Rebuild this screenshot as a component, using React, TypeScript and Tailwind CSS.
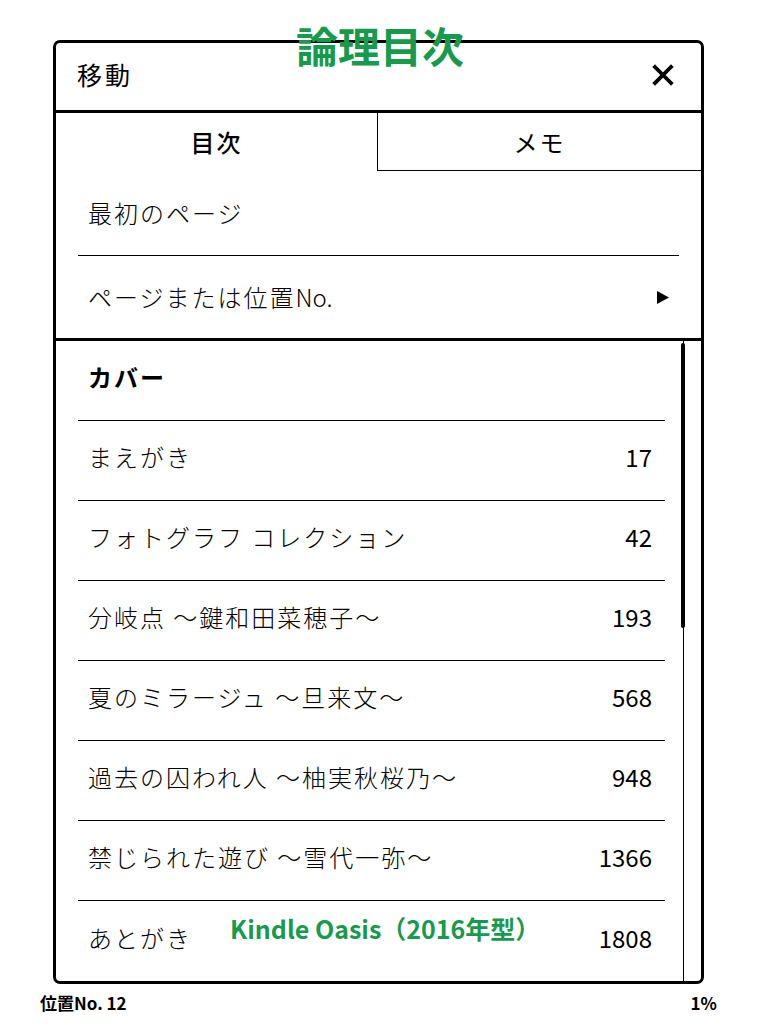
import React from "react";

// Kindle "移動" dialog showing the logical table of contents.
const FONT = { fontFamily: '"Noto Sans CJK JP", "Noto Sans", sans-serif' };

const chapters: { title: string; loc?: string; bold?: boolean }[] = [
  { title: "カバー", bold: true },
  { title: "まえがき", loc: "17" },
  { title: "フォトグラフ コレクション", loc: "42" },
  { title: "分岐点 〜鍵和田菜穂子〜", loc: "193" },
  { title: "夏のミラージュ 〜旦来文〜", loc: "568" },
  { title: "過去の囚われ人 〜柚実秋桜乃〜", loc: "948" },
  { title: "禁じられた遊び 〜雪代一弥〜", loc: "1366" },
  { title: "あとがき", loc: "1808" },
];

function CloseIcon() {
  return (
    <svg width="22" height="22" viewBox="0 0 22 22" aria-hidden="true">
      <path d="M3 3 L19 19 M19 3 L3 19" stroke="#000" strokeWidth="3.8" strokeLinecap="square" />
    </svg>
  );
}

export default function App() {
  return (
    <div className="relative h-[1024px] w-[758px] overflow-hidden bg-white text-black" style={FONT}>
      <div className="ml-[53px] mt-[40px] flex h-[944px] w-[651px] flex-col overflow-hidden rounded-[7px] border-[3px] border-black">
        <header className="flex h-[70px] shrink-0 items-center justify-between border-b-[3px] border-black pb-[4px] pl-[21px] pr-[27px]">
          <span className="text-[25px] leading-none tracking-[3px]">移動</span>
          <CloseIcon />
        </header>

        <div className="flex h-[58px] shrink-0">
          <div className="flex w-[321px] items-center justify-center text-[24px] font-medium tracking-[2px]">目次</div>
          <div className="flex flex-1 items-center justify-center border-b border-l border-black text-[24px] tracking-[2px]">
            メモ
          </div>
        </div>

        <div className="flex h-[84px] shrink-0 items-center pl-[32px] text-[24px] font-light tracking-[2px]">
          最初のページ
        </div>
        <div className="mx-[22px] h-px shrink-0 bg-black" />
        <div className="flex h-[85px] shrink-0 items-center justify-between border-b-[3px] border-black pl-[32px] pr-[32px] text-[24px] font-light">
          <span>
            <span className="tracking-[2px]">ページまたは位置</span>No.
          </span>
          <svg width="12" height="13" viewBox="0 0 12 13" aria-hidden="true">
            <path d="M0 0 L12 6.5 L0 13 Z" fill="#000" />
          </svg>
        </div>

        <div className="relative flex-1">
          <ul className="ml-[22px] mr-[36px]">
            {chapters.map((c, i) => (
              <li
                key={c.title}
                className={`flex h-[80px] items-center justify-between pb-[7px] pl-[10px] pr-[13px] text-[24px] ${
                  i < chapters.length - 1 ? "border-b border-black" : ""
                }`}
              >
                <span className={c.bold ? "font-bold tracking-[2px]" : "font-light tracking-[2px]"}>{c.title}</span>
                {c.loc ? <span className="font-normal">{c.loc}</span> : null}
              </li>
            ))}
          </ul>
          <div className="absolute bottom-0 left-[627px] top-0 w-px bg-black" />
          <div className="absolute left-[625px] top-[2px] h-[285px] w-[4px] rounded-full bg-black" />
        </div>
      </div>

      <div className="flex items-center justify-between pl-[40px] pr-[41px] pt-[6px] text-[17px] font-bold">
        <span>位置No. 12</span>
        <span>1%</span>
      </div>

      <div className="absolute left-[296px] top-[24px] text-[42px] font-bold leading-none text-[#179a4c]">論理目次</div>
      <div className="absolute left-[230px] top-[916px] text-[25px] font-bold leading-none text-[#179a4c]">
        Kindle Oasis（2016年型）
      </div>
    </div>
  );
}
